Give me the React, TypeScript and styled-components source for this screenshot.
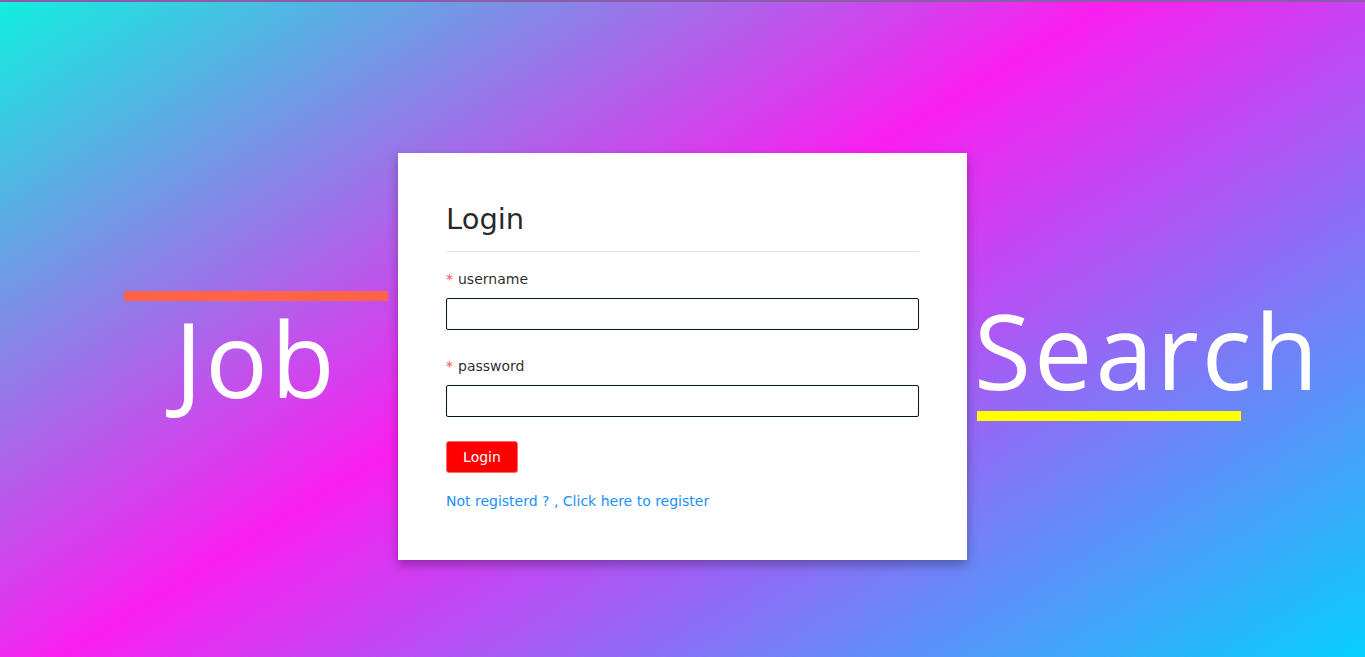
import React from "react";
import styled, { createGlobalStyle } from "styled-components";

const GlobalStyle = createGlobalStyle`
  html, body { margin: 0; padding: 0; }
  body {
    font-family: "DejaVu Sans", "Open Sans", sans-serif;
    overflow: hidden;
  }
  * { box-sizing: border-box; }
`;

const Page = styled.div`
  width: 100vw;
  height: 100vh;
  display: flex;
  flex-direction: column;
  background: linear-gradient(148deg, #11efdf 0%, #fa1ff0 46%, #06cffe 100%);
`;

const TopStrip = styled.div`
  height: 2px;
  background: #8c5ca8;
  flex-shrink: 0;
`;

const Stage = styled.main`
  display: flex;
  justify-content: center;
  align-items: flex-start;
  padding-top: 151px;
`;

const Side = styled.div<{ $side: "left" | "right" }>`
  width: 264px;
  flex-shrink: 0;
  display: flex;
  flex-direction: column;
  margin-top: ${(p) => (p.$side === "left" ? "138px" : "145px")};
  margin-left: ${(p) => (p.$side === "right" ? "10px" : "0")};
  margin-right: ${(p) => (p.$side === "left" ? "10px" : "0")};
  align-items: ${(p) => (p.$side === "left" ? "center" : "flex-start")};
`;

const Bar = styled.div<{ $color: string; $gap?: number }>`
  width: 264px;
  height: 10px;
  background: ${(p) => p.$color};
  margin-top: ${(p) => p.$gap ?? 0}px;
`;

const BigWord = styled.div<{ $shift?: number; $gap?: number }>`
  font-family: "Open Sans", sans-serif;
  font-size: 104px;
  line-height: 104px;
  letter-spacing: 3px;
  font-weight: 400;
  color: #ffffff;
  white-space: nowrap;
  margin-left: ${(p) => p.$shift ?? 0}px;
  margin-top: ${(p) => p.$gap ?? 0}px;
`;

const Card = styled.section`
  width: 569px;
  flex-shrink: 0;
  background: #ffffff;
  padding: 48px;
  box-shadow: 0 5px 10px rgba(0, 0, 0, 0.3);
`;

const Title = styled.h2`
  margin: 0;
  font-size: 29px;
  line-height: 36px;
  font-weight: 400;
  color: rgba(0, 0, 0, 0.85);
`;

const Divider = styled.hr`
  margin: 14px 0 16px;
  border: none;
  border-top: 1px solid #e4e4e4;
  height: 0;
`;

const FormItem = styled.div<{ $mb: number }>`
  display: flex;
  flex-direction: column;
  margin-bottom: ${(p) => p.$mb}px;
`;

const Label = styled.label`
  font-size: 14px;
  line-height: 22px;
  color: rgba(0, 0, 0, 0.85);
  padding-bottom: 8px;
  display: flex;
  align-items: center;
`;

const Required = styled.span`
  color: #ff4d4f;
  font-size: 14px;
  margin-right: 5px;
`;

const Input = styled.input`
  height: 32px;
  width: 100%;
  border: 1px solid #001529;
  border-radius: 2px;
  padding: 4px 11px;
  font-size: 14px;
  font-family: inherit;
  outline: none;
  background: #fff;
`;

const Button = styled.button`
  height: 32px;
  width: 72px;
  padding: 0;
  background: #ff0000;
  color: #ffffff;
  border: 1px solid #ff6b6b;
  border-radius: 3px;
  font-size: 14px;
  font-family: inherit;
  cursor: pointer;
`;

const RegisterLink = styled.a`
  display: block;
  margin-top: 17px;
  font-size: 14px;
  line-height: 22px;
  color: #1890ff;
  text-decoration: none;
`;

export default function App() {
  return (
    <>
      <GlobalStyle />
      <Page>
        <TopStrip />
        <Stage>
          <Side $side="left">
            <Bar $color="#ff6347" />
            <BigWord $gap={5}>Job</BigWord>
          </Side>
          <Card>
            <Title>Login</Title>
            <Divider />
            <FormItem $mb={25}>
              <Label>
                <Required>*</Required>username
              </Label>
              <Input type="text" />
            </FormItem>
            <FormItem $mb={24}>
              <Label>
                <Required>*</Required>password
              </Label>
              <Input type="password" />
            </FormItem>
            <Button>Login</Button>
            <RegisterLink href="#">Not registerd ? , Click here to register</RegisterLink>
          </Card>
          <Side $side="right">
            <BigWord $shift={-3}>Search</BigWord>
            <Bar $color="#ffff00" $gap={9} />
          </Side>
        </Stage>
      </Page>
    </>
  );
}
